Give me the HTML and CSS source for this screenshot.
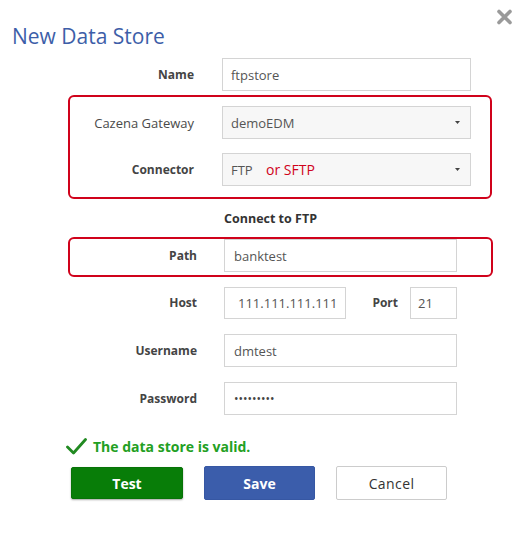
FILE: index.html
```html
<!DOCTYPE html>
<html lang="en">
<head>
<meta charset="utf-8">
<title>New Data Store</title>
<link rel="stylesheet" href="styles.css">
</head>
<body>
<div class="dialog">
  <header class="head">
    <h1 class="title">New Data Store</h1>
    <button class="close" aria-label="Close">
      <svg width="17" height="16" viewBox="0 0 17 16"><path d="M3 2.5 L14 13.5 M14 2.5 L3 13.5" stroke="#9a9a9a" stroke-width="3.6" stroke-linecap="round"/></svg>
    </button>
  </header>

  <div class="row row-a outer first">
    <span class="lbl">Name</span>
    <div class="field">ftpstore</div>
  </div>

  <div class="box box-a">
    <div class="row row-a">
      <span class="lbl light">Cazena Gateway</span>
      <div class="field select"><span>demoEDM</span><svg class="caret" width="5" height="3" viewBox="0 0 5 3"><path d="M0 0 H5 L2.5 3 Z" fill="#444"/></svg></div>
    </div>
    <div class="row row-a">
      <span class="lbl">Connector</span>
      <div class="field select"><span>FTP <span class="alt">or SFTP</span></span><svg class="caret" width="5" height="3" viewBox="0 0 5 3"><path d="M0 0 H5 L2.5 3 Z" fill="#444"/></svg></div>
    </div>
  </div>

  <div class="row row-b outer section-row">
    <span></span>
    <span class="section">Connect to FTP</span>
  </div>

  <div class="box box-b">
    <div class="row row-b">
      <span class="lbl">Path</span>
      <div class="field">banktest</div>
    </div>
  </div>

  <div class="row row-b outer host-row">
    <span class="lbl">Host</span>
    <div class="pair">
      <div class="field host">111.111.111.111</div>
      <span class="lbl port-lbl">Port</span>
      <div class="field port">21</div>
    </div>
  </div>

  <div class="row row-b outer user-row">
    <span class="lbl">Username</span>
    <div class="field">dmtest</div>
  </div>

  <div class="row row-b outer pass-row">
    <span class="lbl">Password</span>
    <div class="field dots">•••••••••</div>
  </div>

  <div class="valid">
    <svg width="21" height="17" viewBox="0 0 21 17"><path d="M1.5 9 L7.5 15 L19.5 1.5" fill="none" stroke="#218a21" stroke-width="2.8" stroke-linecap="round" stroke-linejoin="round"/></svg>
    <span>The data store is valid.</span>
  </div>

  <div class="actions">
    <button class="btn btn-test">Test</button>
    <button class="btn btn-save">Save</button>
    <button class="btn btn-cancel">Cancel</button>
  </div>
</div>
</body>
</html>
```

FILE: styles.css
```css
* { box-sizing: border-box; }

html, body {
  margin: 0;
  padding: 0;
  background: #ffffff;
}

body {
  font-family: "Open Sans", "Liberation Sans", sans-serif;
  color: #444;
  width: 526px;
  height: 542px;
}

.dialog {
  display: flex;
  flex-direction: column;
  align-items: flex-start;
}

.head {
  align-self: stretch;
  display: flex;
  justify-content: space-between;
  align-items: flex-start;
  padding: 9px 13px 0 12px;
}

.title {
  margin: 12px 0 0 0;
  font-size: 21px;
  font-weight: 400;
  line-height: 30px;
  color: #3d5ea8;
}

.close {
  border: 0;
  padding: 0;
  margin: 0;
  background: none;
  width: 17px;
  height: 16px;
  display: block;
}
.close svg { display: block; }

.row {
  display: grid;
  align-items: center;
}

.row-a {
  grid-template-columns: 124px 249px;
  column-gap: 28px;
}

.row-b {
  grid-template-columns: 127px 233px;
  column-gap: 27px;
}

.outer { margin-left: 70px; }
.first { margin-top: 7px; }

.lbl {
  text-align: right;
  font-size: 12px;
  font-weight: 700;
  color: #444;
  line-height: 16px;
}

.lbl.light {
  font-weight: 400;
  font-size: 13px;
  color: #4a4a4a;
}

.field {
  height: 33px;
  border: 1px solid #d4d4d4;
  background: #fff;
  padding: 0 8px;
  font-size: 13px;
  color: #555;
  display: flex;
  align-items: center;
}

.select {
  background: #f7f7f7;
  justify-content: space-between;
  padding-right: 10px;
}

.caret { display: block; }

.alt {
  color: #d0021b;
  font-size: 14px;
  margin-left: 10px;
}

.box {
  border: 2px solid #d0021b;
  border-radius: 6px;
  margin-left: 68px;
}

.box-a {
  width: 424px;
  margin-top: 4px;
  padding: 9px 0 11px 0;
  display: flex;
  flex-direction: column;
  gap: 14px;
}

.section-row { margin-top: 11px; }

.section {
  font-size: 12.5px;
  font-weight: 700;
  color: #333;
  line-height: 18px;
}

.box-b {
  width: 425px;
  margin-top: 9px;
  padding: 0 0 3px 0;
}

.box-b .field { padding-left: 9px; }

.host-row { margin-top: 10px; }
.host-row .field { height: 32px; }

.pair {
  display: flex;
  align-items: center;
}

.host {
  width: 122px;
  padding-left: 13px;
}

.port-lbl {
  margin-left: auto;
  margin-right: 12px;
}

.port {
  width: 47px;
  padding-left: 7px;
}

.user-row { margin-top: 15px; }
.user-row .field { padding-left: 9px; }
.pass-row { margin-top: 15px; }

.dots {
  padding-left: 9px;
  font-size: 12px;
  letter-spacing: 0;
  color: #444;
}

.valid {
  margin: 21px 0 0 66px;
  display: flex;
  align-items: center;
  gap: 6px;
  height: 20px;
}
.valid svg { display: block; }
.valid span {
  font-size: 14px;
  font-weight: 700;
  color: #23a023;
}

.actions {
  margin: 10px 0 0 71px;
  display: flex;
  align-items: center;
  gap: 21px;
}

.btn {
  height: 34px;
  width: 111px;
  border-radius: 2px;
  font-family: "Open Sans", "Liberation Sans", sans-serif;
  font-size: 14px;
  padding: 0;
  cursor: pointer;
}

.btn-test {
  width: 112px;
  height: 32px;
  background: #087d08;
  border: 1px solid #077307;
  color: #fff;
  font-weight: 700;
  box-shadow: 0 1px 2px rgba(0,0,0,0.35);
}

.btn-save {
  background: #3b5dab;
  border: 1px solid #3657a3;
  color: #fff;
  font-weight: 700;
}

.btn-cancel {
  background: #fff;
  border: 1px solid #cccccc;
  color: #333;
  font-weight: 400;
  letter-spacing: 0.4px;
}
```
